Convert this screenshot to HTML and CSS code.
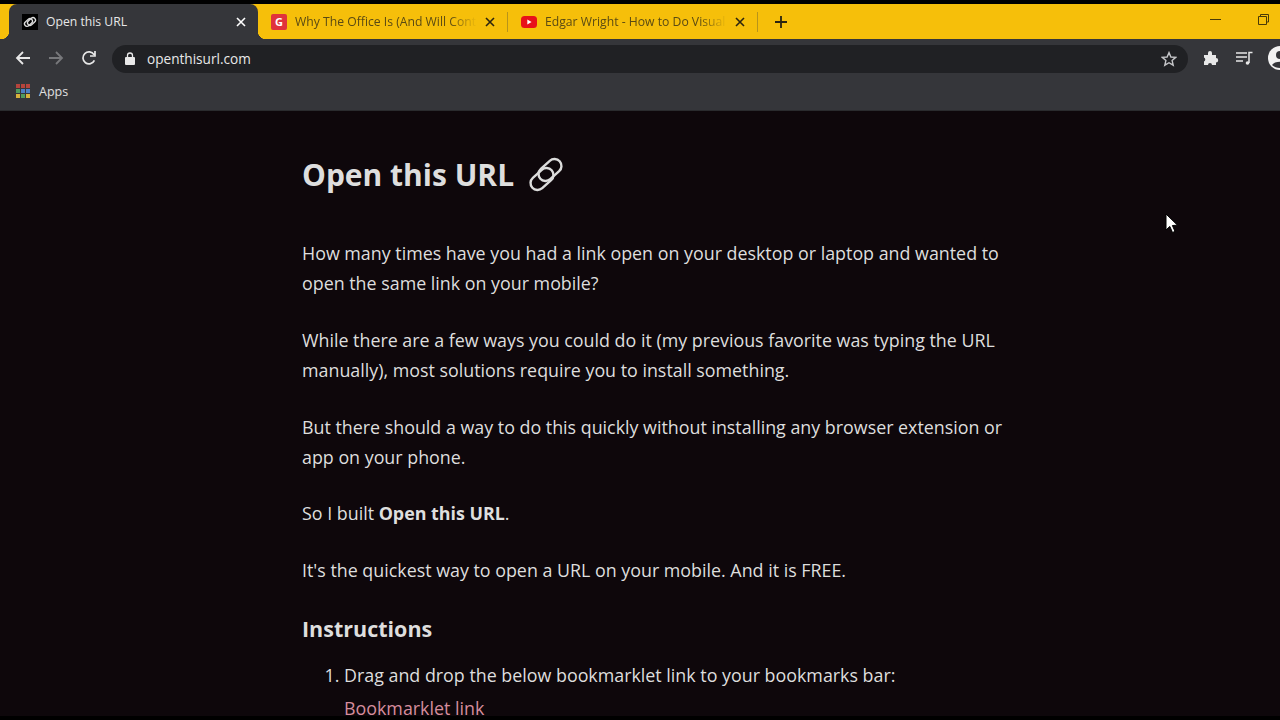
FILE: index.html
```html
<!DOCTYPE html>
<html lang="en">
<head>
    <meta charset="UTF-8">
    <title>Open this URL</title>
    <link rel="stylesheet" href="styles.css">
</head>
<body>
    <div class="browser">
        <div class="tab-strip">
            <div class="tab tab-active">
                <span class="favicon favicon-link">
                    <svg width="16" height="16" viewBox="0 0 16 16"><g fill="none" stroke="#ddd" stroke-width="1.300"><rect x="2" y="6" width="9" height="5" rx="2.500" transform="rotate(-42 6.500 8.500)"/><rect x="5" y="5" width="9" height="5" rx="2.500" transform="rotate(-42 9.500 7.500)"/></g></svg>
                </span>
                <span class="tab-title">Open this URL</span>
                <svg class="tab-close" width="10" height="10" viewBox="0 0 10 10"><path d="M1 1L9 9M9 1L1 9" stroke="#fff" stroke-width="1.600"/></svg>
            </div>
            <div class="tab">
                <span class="favicon favicon-g">G</span>
                <span class="tab-title tab-title-fade">Why The Office Is (And Will Cont</span>
                <svg class="tab-close" width="10" height="10" viewBox="0 0 10 10"><path d="M1 1L9 9M9 1L1 9" stroke="#2b2410" stroke-width="1.600"/></svg>
            </div>
            <div class="tab-sep"></div>
            <div class="tab">
                <svg class="favicon" width="16" height="16" viewBox="0 0 16 16"><rect y="2" width="16" height="12" rx="3.500" fill="#e8101a"/><path d="M6.300 5.600L10.600 8L6.300 10.400Z" fill="#fff"/></svg>
                <span class="tab-title tab-title-fade">Edgar Wright - How to Do Visual</span>
                <svg class="tab-close" width="10" height="10" viewBox="0 0 10 10"><path d="M1 1L9 9M9 1L1 9" stroke="#2b2410" stroke-width="1.600"/></svg>
            </div>
            <div class="tab-sep"></div>
            <svg class="new-tab" width="14" height="14" viewBox="0 0 14 14"><path d="M7 1V13M1 7H13" stroke="#2b2410" stroke-width="1.800"/></svg>
            <div class="window-controls">
                <svg width="11" height="11" viewBox="0 0 11 11"><path d="M0 5.500H11" stroke="#4a3a08" stroke-width="1"/></svg>
                <svg width="11" height="11" viewBox="0 0 11 11"><path d="M2.500 2.500V.5H10.500V8H8.500M.5 2.500H8.500V10.500H.5Z" fill="none" stroke="#4a3a08" stroke-width="1"/></svg>
            </div>
        </div>
        <div class="toolbar">
            <div class="nav-buttons">
                <svg width="16" height="16" viewBox="0 0 16 16"><path d="M15 8H2M8 2L2 8L8 14" fill="none" stroke="#e8e8e8" stroke-width="1.800"/></svg>
                <svg width="16" height="16" viewBox="0 0 16 16"><path d="M1 8H14M8 2L14 8L8 14" fill="none" stroke="#77787b" stroke-width="1.800"/></svg>
                <svg width="16" height="16" viewBox="0 0 16 16"><path d="M13.400 10.400A6 6 0 1 1 13 4.600M14 1V6H9" fill="none" stroke="#e8e8e8" stroke-width="1.700"/></svg>
            </div>
            <div class="omnibox">
                <svg width="10" height="13" viewBox="0 0 10 13"><rect y="5" width="10" height="8" rx="1" fill="#e8e8e8"/><path d="M2.500 5.500V3.500A2.500 2.500 0 0 1 7.500 3.500V5.500" fill="none" stroke="#e8e8e8" stroke-width="1.300"/></svg>
                <span class="url">openthisurl.com</span>
                <svg class="star" width="16" height="16" viewBox="0 0 16 16"><path d="M8 1.600L9.900 6L14.700 6.400L11.100 9.500L12.200 14.200L8 11.700L3.800 14.200L4.900 9.500L1.300 6.400L6.100 6Z" fill="none" stroke="#c4c5c8" stroke-width="1.400"/></svg>
            </div>
            <div class="toolbar-right">
                <svg width="16" height="16" viewBox="0 0 16 16"><path d="M1 5H5V3A2 2 0 0 1 9 3V5H13V8A2.200 2.200 0 0 1 13 12.400V15H9A2 2 0 0 0 5 15H1V11.500A2.200 2.200 0 0 0 1 7.500Z" fill="#e8e8e8"/></svg>
                <svg width="17" height="14" viewBox="0 0 17 14"><path d="M0 2H11M0 6H11M0 10H7" stroke="#e8e8e8" stroke-width="1.500"/><path d="M13 12V1.500H16.500" fill="none" stroke="#e8e8e8" stroke-width="1.500"/><circle cx="11.500" cy="12" r="1.800" fill="#e8e8e8"/></svg>
                <svg class="avatar" width="24" height="24" viewBox="0 0 24 24"><circle cx="12" cy="12" r="12" fill="#f2f2f2"/><circle cx="12" cy="9" r="4" fill="#35363a"/><path d="M4 19C6 14.500 18 14.500 20 19C16 23 8 23 4 19Z" fill="#35363a"/></svg>
            </div>
        </div>
        <div class="bookmarks">
            <span class="apps-grid">
                <i class="c-red"></i><i class="c-red"></i><i class="c-red"></i>
                <i class="c-green"></i><i class="c-blue"></i><i class="c-blue"></i>
                <i class="c-yellow"></i><i class="c-green"></i><i class="c-yellow"></i>
            </span>
            <span class="apps-label">Apps</span>
        </div>
    </div>

    <main class="page">
        <article class="content">
            <h1>Open this URL
                <svg class="title-icon" width="36" height="36" viewBox="0 0 36 36"><g fill="none" stroke="#dcdcdc" stroke-width="2.400"><rect x="1" y="15" width="26" height="14" rx="7" transform="rotate(-42 14 22)"/><rect x="9" y="6" width="26" height="14" rx="7" transform="rotate(-42 22 13)"/></g></svg>
            </h1>
            <p>How many times have you had a link open on your desktop or laptop and wanted to open the same link on your mobile?</p>
            <p>While there are a few ways you could do it (my previous favorite was typing the URL manually), most solutions require you to install something.</p>
            <p>But there should a way to do this quickly without installing any browser extension or app on your phone.</p>
            <p>So I built <strong>Open this URL</strong>.</p>
            <p>It's the quickest way to open a URL on your mobile. And it is FREE.</p>
            <h2>Instructions</h2>
            <ol>
                <li>Drag and drop the below bookmarklet link to your bookmarks bar:<br><a href="#">Bookmarklet link</a></li>
            </ol>
        </article>
        <svg class="cursor" width="14" height="21" viewBox="0 0 14 21"><path d="M1 1V17L4.800 13.400L7.500 19.500L10 18.400L7.400 12.500L12.500 12.200Z" fill="#fff" stroke="#000" stroke-width="1"/></svg>
    </main>
</body>
</html>
```
FILE: styles.css
```css
* {
    margin: 0;
    padding: 0;
    box-sizing: border-box;
}

body {
    width: 1280px;
    height: 720px;
    overflow: hidden;
    background: #000;
    padding: 4px 0;
    display: flex;
    flex-direction: column;
    font-family: 'Open Sans', sans-serif;
}

.browser {
    flex: none;
}

.tab-strip {
    height: 35px;
    background: #f6bf0a;
    display: flex;
    align-items: center;
    padding-left: 9px;
}

.tab {
    width: 249px;
    height: 35px;
    padding: 0 12px 0 13px;
    display: flex;
    align-items: center;
    color: #5a4a14;
    font-size: 12.200px;
}

.tab-active {
    background: #35363a;
    color: #e8e8e8;
    border-radius: 8px 8px 0 0;
    position: relative;
}

/* little curves at the foot of the active tab */
.tab-active::before,
.tab-active::after {
    content: "";
    position: absolute;
    bottom: 0;
    width: 8px;
    height: 8px;
}

.tab-active::before {
    left: -8px;
    background: radial-gradient(circle at 0 0, #f6bf0a 8px, #35363a 8.500px);
}

.tab-active::after {
    right: -8px;
    background: radial-gradient(circle at 100% 0, #f6bf0a 8px, #35363a 8.500px);
}

.tab-title {
    flex: 1;
    margin: 0 8px 0 8px;
    white-space: nowrap;
    overflow: hidden;
}

.tab-title-fade {
    -webkit-mask-image: linear-gradient(to right, #000 85%, transparent 100%);
    mask-image: linear-gradient(to right, #000 85%, transparent 100%);
}

.tab-close {
    flex: none;
}

.favicon {
    flex: none;
    width: 16px;
    height: 16px;
}

.favicon-link {
    background: #000;
    display: flex;
}

.favicon-g {
    background: #e0323c;
    color: #fff;
    border-radius: 2px;
    font-weight: 700;
    font-size: 11px;
    line-height: 16px;
    text-align: center;
}

.tab-sep {
    width: 1px;
    height: 20px;
    background: #b8941a;
}

.new-tab {
    margin-left: 16px;
}

.window-controls {
    margin-left: auto;
    margin-right: 11px;
    margin-top: -4px;
    display: flex;
    gap: 37px;
    align-items: center;
}

.toolbar {
    height: 38px;
    background: #35363a;
    display: flex;
    align-items: center;
    padding-left: 15px;
    overflow: hidden;
}

.nav-buttons {
    display: flex;
    align-items: center;
    gap: 17px;
}

.omnibox {
    flex: none;
    width: 1076px;
    height: 28px;
    margin-left: 15px;
    margin-top: 1px;
    background: #202124;
    border-radius: 14px;
    display: flex;
    align-items: center;
    padding: 0 11px 0 13px;
}

.url {
    margin-left: 12px;
    color: #e8e8e8;
    font-size: 13.600px;
}

.star {
    margin-left: auto;
}

.toolbar-right {
    flex: none;
    display: flex;
    align-items: center;
    gap: 17px;
    margin-left: 15px;
    width: 100px;
}

.avatar {
    flex: none;
    margin-left: -2px;
}

.bookmarks {
    height: 34px;
    background: #35363a;
    border-bottom: 1px solid #2a2b2e;
    display: flex;
    align-items: center;
    padding: 0 0 5px 16px;
    gap: 9px;
}

.apps-grid {
    width: 14px;
    height: 14px;
    display: grid;
    grid-template-columns: repeat(3, 4px);
    gap: 1px;
}

.c-red { background: #b5443c; }
.c-blue { background: #4c7fc4; }
.c-green { background: #4f9a5e; }
.c-yellow { background: #d8b23c; }

.apps-label {
    color: #e0e0e0;
    font-size: 12.500px;
}

.page {
    flex: 1;
    min-height: 0;
    overflow: hidden;
    background: #0e070b;
    position: relative;
    padding: 42px 0 0 302px;
    color: #dedede;
}

.content {
    width: 720px;
    font-size: 17.850px;
    line-height: 30.400px;
}

h1 {
    font-size: 30px;
    font-weight: 700;
    line-height: 44px;
    margin-bottom: 41px;
    display: flex;
    align-items: center;
    gap: 14px;
}

p {
    margin-bottom: 26px;
}

strong {
    font-weight: 700;
}

h2 {
    font-size: 21.500px;
    font-weight: 700;
    line-height: 30px;
    margin: 29px 0 16px;
}

ol {
    padding-left: 42px;
}

a {
    color: #d68d9d;
    text-decoration: none;
    display: inline-block;
    margin-top: 2px;
}

.cursor {
    position: absolute;
    left: 1165px;
    top: 102px;
}
```
